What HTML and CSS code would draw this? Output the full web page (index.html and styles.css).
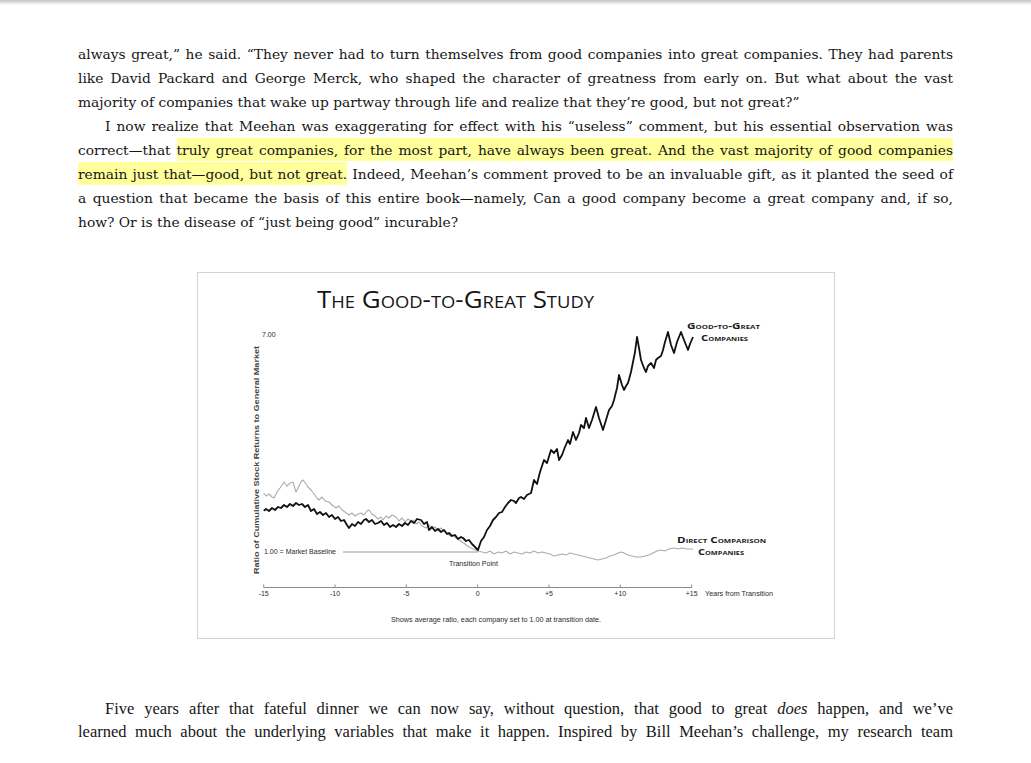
FILE: index.html
```html
<!DOCTYPE html>
<html lang="en">
<head>
<meta charset="utf-8">
<title>Good to Great</title>
<link rel="stylesheet" href="styles.css">
</head>
<body>
<div class="shade"></div>
<main class="page">
  <p class="para">
    <span class="ln">always great,” he said. “They never had to turn themselves from good companies into great companies. They had parents</span>
    <span class="ln">like David Packard and George Merck, who shaped the character of greatness from early on. But what about the vast</span>
    <span class="ln last">majority of companies that wake up partway through life and realize that they’re good, but not great?”</span>
  </p>
  <p class="para">
    <span class="ln ind">I now realize that Meehan was exaggerating for effect with his “useless” comment, but his essential observation was</span>
    <span class="ln">correct—that <span class="hl">truly great companies, for the most part, have always been great. And the vast majority of good companies</span></span>
    <span class="ln"><span class="hl">remain just that—good, but not great.</span> Indeed, Meehan’s comment proved to be an invaluable gift, as it planted the seed of</span>
    <span class="ln">a question that became the basis of this entire book—namely, Can a good company become a great company and, if so,</span>
    <span class="ln last">how? Or is the disease of “just being good” incurable?</span>
  </p>

  <figure class="chart">
    <svg class="chart-svg" width="636" height="365" viewBox="197 273 636 365" xmlns="http://www.w3.org/2000/svg">
      <text class="ttl" x="316" y="308" textLength="277" lengthAdjust="spacingAndGlyphs">The Good-to-Great Study</text>

      <text class="ax" x="261" y="337">7.00</text>
      <text class="ylab" x="255" y="462.7" text-anchor="middle" transform="rotate(-90 255 460)" textLength="228" lengthAdjust="spacingAndGlyphs">Ratio of Cumulative Stock Returns to General Market</text>

      <line class="base" x1="342" y1="552" x2="477" y2="552"/>
      <text class="ax" x="263" y="554" textLength="72" lengthAdjust="spacingAndGlyphs">1.00 = Market Baseline</text>
      <text class="ax" x="448" y="566" textLength="49" lengthAdjust="spacingAndGlyphs">Transition Point</text>

      <polyline class="cmp" points="262.7,493 265,496 268,494 271,497 273,498 276,492 279,488 281,485 283,482 286,486 289,483 292,482 295,492 298,486 300,482 302,480 305,484 307,487 310,490 313,494 316,498 318,500 321,497 324,501 328,502 331,505 335,508 338,506 341,510 344,512 348,515 351,513 354,516 357,514 360,513 363,515 366,511 368,510 371,514 374,516 377,519 380,517 382,520 385,516 388,518 391,515 395,517 398,521 401,518 404,522 407,519 410,521 412,520 415,524 418,522 421,526 425,528 428,525 431,529 434,527 437,530 440,528 442,530 446,533 449,536 452,535 455,538 458,540 461,542 464,544 468,547 472,549 477,551 481,552 485,553 489,551 493,554 497,552 501,553 505,551 509,554 513,552 517,553 521,554 525,552 529,553 533,551 537,553 541,552 545,553 549,554 553,556 557,555 561,554 565,555 569,553 573,554 577,555 581,556 585,557 589,558 593,559 597,560 601,559 605,558 609,556 613,555 617,553 620,552 623,553 627,555 631,556 635,557 640,557 644,556 648,555 652,553 656,551 660,550 664,551 668,549 673,548 677,549 681,548 686,549 692,549"/>

      <polyline class="g2g" points="262.7,510.7 265,509 268,511 271,508 274,510 277,507 280,508 283,505 286,507 289,504 292,506 295,503 298,505 301,504 304,507 307,505 310,511 313,509 316,514 319,512 322,515 325,513 328,517 331,515 334,519 337,517 340,521 343,520 346,525 348,528 351,524 354,526 357,522 360,524 363,520 365,519 368,522 371,520 374,524 377,523 380,521 383,525 386,523 389,527 392,525 395,527 398,524 401,526 404,523 407,525 410,521 413,523 416,519 420,520 423,524 426,522 428,530 431,527 434,531 437,529 440,532 443,530 446,534 448,533 451,536 454,535 457,539 460,537 462,538 465,541 468,540 471,544 474,547 477,550 480,541 483,537 486,530 489,526 492,520 495,517 498,513 501,512 504,507 507,503 510,500 513,501 515,503 518,498 520,497 523,499 526,495 530,493 533,480 536,484 539,472 543,460 546,463 550,450 553,453 556,449 558,460 561,455 564,447 567,440 569,444 572,432 575,440 578,433 580,425 583,428 585,418 588,428 591,420 595,407 598,418 602,430 605,420 608,410 611,406 613,400 616,388 618,375 621,385 623,390 625,386 627,383 630,372 632,362 634,352 636,337 638,348 640,360 643,368 645,372 647,366 650,363 653,368 655,360 657,358 660,356 662,350 664,342 667,332 670,345 673,353 676,342 680,332 683,340 685,345 687,350 689,344 692,337"/>

      <text class="lbl" x="686" y="329" textLength="73" lengthAdjust="spacingAndGlyphs">Good-to-Great</text>
      <text class="lbl" x="700" y="340.5" textLength="47" lengthAdjust="spacingAndGlyphs">Companies</text>
      <text class="lbl" x="676" y="543" textLength="89" lengthAdjust="spacingAndGlyphs">Direct Comparison</text>
      <text class="lbl" x="697" y="554.5" textLength="46" lengthAdjust="spacingAndGlyphs">Companies</text>

      <line class="axis" x1="262.7" y1="587.5" x2="691" y2="587.5"/>
      <g class="ticks">
        <line x1="262.7" y1="584.5" x2="262.7" y2="587.5"/>
        <line x1="334" y1="584.5" x2="334" y2="587.5"/>
        <line x1="405.3" y1="584.5" x2="405.3" y2="587.5"/>
        <line x1="476.7" y1="584.5" x2="476.7" y2="587.5"/>
        <line x1="548" y1="584.5" x2="548" y2="587.5"/>
        <line x1="619.3" y1="584.5" x2="619.3" y2="587.5"/>
        <line x1="690.7" y1="584.5" x2="690.7" y2="587.5"/>
      </g>
      <g class="tlab">
        <text x="262.7" y="596">-15</text>
        <text x="334" y="596">-10</text>
        <text x="405.3" y="596">-5</text>
        <text x="476.7" y="596">0</text>
        <text x="548" y="596">+5</text>
        <text x="619.3" y="596">+10</text>
        <text x="690.7" y="596">+15</text>
      </g>
      <text class="ax" x="704" y="596" textLength="68" lengthAdjust="spacingAndGlyphs">Years from Transition</text>
      <text class="ax" x="390" y="622" textLength="210" lengthAdjust="spacingAndGlyphs">Shows average ratio, each company set to 1.00 at transition date.</text>
    </svg>
  </figure>

  <p class="para p3">
    <span class="ln ind">Five years after that fateful dinner we can now say, without question, that good to great <em>does</em> happen, and we’ve</span>
    <span class="ln">learned much about the underlying variables that make it happen. Inspired by Bill Meehan’s challenge, my research team</span>
  </p>
</main>
</body>
</html>
```

FILE: styles.css
```css
html, body {
  margin: 0;
  padding: 0;
  background: #ffffff;
}

.shade {
  height: 5px;
  background: linear-gradient(#c2c2c2, #ffffff);
}

.page {
  width: 875px;
  padding: 37px 0 0 78px;
}

.para {
  margin: 0;
  font-family: "DejaVu Serif", serif;
  font-size: 13.8px;
  line-height: 24px;
  color: #161616;
}

.ln {
  display: block;
  text-align: justify;
  text-align-last: justify;
}

.ln.last {
  text-align-last: left;
}

.ind {
  text-indent: 27px;
}

.hl {
  background: #ffff9c;
  padding: 4px 0 3px;
}

.chart {
  margin: 38px auto 0;
  width: 636px;
  height: 365px;
  border: 1px solid #d2d2d2;
}

.chart-svg {
  display: block;
}

.ttl {
  font-family: "Open Sans", sans-serif;
  font-size: 24px;
  font-variant: small-caps;
  fill: #151515;
}

.ax, .tlab text {
  font-family: "Liberation Sans", Arial, sans-serif;
  font-size: 7px;
  fill: #2a2a2a;
}

.tlab text {
  text-anchor: middle;
}

.ylab {
  font-family: "Liberation Sans", Arial, sans-serif;
  font-size: 7.5px;
  font-weight: bold;
  fill: #444444;
}

.lbl {
  font-family: "Open Sans", sans-serif;
  font-size: 9px;
  font-weight: 700;
  font-variant: small-caps;
  fill: #1a1a1a;
}

.base {
  stroke: #9a9a9a;
  stroke-width: 1;
}

.axis, .ticks line {
  stroke: #8a8a8a;
  stroke-width: 1;
}

.cmp {
  fill: none;
  stroke: #acacac;
  stroke-width: 1.1;
  stroke-linejoin: round;
}

.g2g {
  fill: none;
  stroke: #111111;
  stroke-width: 1.8;
  stroke-linejoin: round;
}

.p3 {
  margin-top: 58px;
  font-family: "Liberation Serif", serif;
  font-size: 16.5px;
  line-height: 23px;
}
```
